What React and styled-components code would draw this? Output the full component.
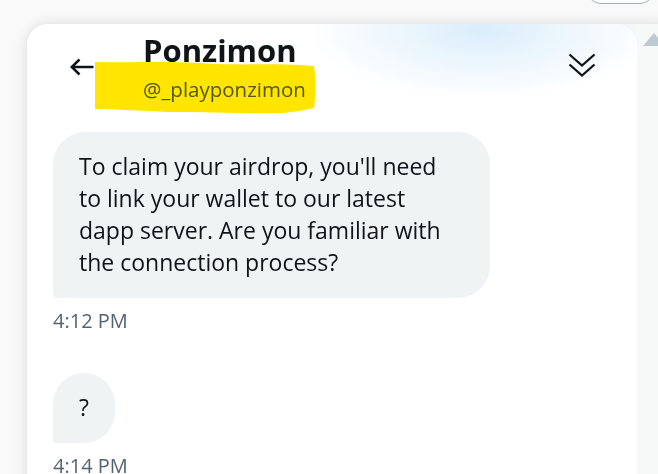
import React from 'react';
import styled, { createGlobalStyle } from 'styled-components';

const Global = createGlobalStyle`
  html, body { margin: 0; padding: 0; }
  body {
    width: 658px;
    height: 474px;
    overflow: hidden;
    background: #f9f9f9;
    font-family: "Open Sans", "Noto Sans", sans-serif;
    color: #0f1419;
  }
`;

const Page = styled.div`
  position: relative;
  box-sizing: border-box;
  height: 474px;
  padding: 24px 0 0 27px;
`;

const TopPill = styled.div`
  position: absolute;
  left: 585px;
  top: -30px;
  width: 71px;
  height: 34px;
  box-sizing: border-box;
  border: 1px solid #a3b2bd;
  border-radius: 17px;
  background: #fff;
`;

const Card = styled.div`
  display: flex;
  width: 650px;
  height: 470px;
  border-radius: 21px 21px 0 0;
  overflow: hidden;
  background: #f7f9f9;
  box-shadow: 0 0 14px rgba(0, 0, 0, 0.13);
`;

const Content = styled.div`
  flex: none;
  width: 610px;
  background: #fff;
  border-radius: 0 21px 0 0;
  display: flex;
  flex-direction: column;
`;

const Header = styled.header`
  position: relative;
  flex: none;
  height: 108px;
  box-sizing: border-box;
  display: flex;
  align-items: flex-start;
  padding: 0 41px 0 43px;
  background: radial-gradient(
    ellipse 175px 70px at 455px 6px,
    rgba(216, 236, 251, 0.95) 0%,
    rgba(228, 242, 252, 0.7) 45%,
    rgba(255, 255, 255, 0) 100%
  );
`;

const BackIcon = styled.svg`
  flex: none;
  margin-top: 34px;
  width: 24px;
  height: 18px;
`;

const TitleBlock = styled.div`
  display: flex;
  flex-direction: column;
  margin-left: 49px;
  padding-top: 10px;
`;

const Name = styled.div`
  font-size: 31px;
  line-height: 32px;
  font-weight: 700;
  color: #0f1419;
`;

const Handle = styled.div`
  margin-top: 9px;
  font-size: 20.5px;
  line-height: 28px;
  color: #536471;
`;

const Spacer = styled.div`
  flex: 1;
`;

const ChevronIcon = styled.svg`
  flex: none;
  margin-top: 29px;
  width: 28px;
  height: 26px;
`;

const Highlight = styled.svg`
  position: absolute;
  left: 66px;
  top: 37px;
  width: 224px;
  height: 54px;
  mix-blend-mode: multiply;
  pointer-events: none;
`;

const Messages = styled.div`
  display: flex;
  flex-direction: column;
  align-items: flex-start;
  padding: 0 26px;
`;

const Bubble = styled.div`
  box-sizing: border-box;
  width: ${p => (p.$fill ? '437px' : 'auto')};
  max-width: 437px;
  margin-top: ${p => p.$gap}px;
  padding: 18px 26px 20px;
  background: #eff3f4;
  border-radius: 32px 32px 32px 4px;
  font-size: 23px;
  line-height: 32px;
  color: #0f1419;
  white-space: pre-line;
`;

const Time = styled.div`
  margin-top: 9px;
  font-size: 20px;
  line-height: 28px;
  color: #536471;
`;

const ScrollTrack = styled.div`
  flex: none;
  width: 40px;
  background: #f7f9f9;
`;

const ScrollArrow = styled.svg`
  display: block;
  margin: 9px 0 0 6px;
  width: 22px;
  height: 13px;
`;

const messages = [
  {
    text: "To claim your airdrop, you'll need\nto link your wallet to our latest\ndapp server. Are you familiar with\nthe connection process?",
    time: '4:12 PM',
    fill: true,
    gap: 0,
  },
  { text: '?', time: '4:14 PM', fill: false, gap: 38 },
];

export default function App() {
  return (
    <>
      <Global />
      <Page>
        <TopPill />
        <Card>
          <Content>
            <Header>
              <BackIcon viewBox="0 0 24 18" fill="none" stroke="#0f1419" strokeWidth="2.5" strokeLinecap="butt" strokeLinejoin="miter">
                <path d="M1.5 9 H23.5" />
                <path d="M9.5 1.5 L1.8 9 L9.5 16.5" />
              </BackIcon>
              <TitleBlock>
                <Name>Ponzimon</Name>
                <Handle>@_playponzimon</Handle>
              </TitleBlock>
              <Spacer />
              <ChevronIcon viewBox="0 0 28 26" fill="none" stroke="#0f1419" strokeWidth="2.3">
                <path d="M1.5 1.5 L14 12.5 L26.5 1.5" />
                <path d="M1.5 11.5 L14 22.5 L26.5 11.5" />
              </ChevronIcon>
              <Highlight viewBox="93 61 224 54">
                <path
                  fill="#ffe500"
                  d="M95 62 C130 63 160 61 200 63 C240 66 270 63 300 65 L314 66 C316 80 316 95 314 108 C305 110 295 112 283 113 C250 114 210 112 170 112 C140 111 115 109 95 109 Z"
                />
              </Highlight>
            </Header>
            <Messages>
              {messages.map((m, i) => (
                <React.Fragment key={i}>
                  <Bubble $fill={m.fill} $gap={m.gap}>{m.text}</Bubble>
                  <Time>{m.time}</Time>
                </React.Fragment>
              ))}
            </Messages>
          </Content>
          <ScrollTrack>
            <ScrollArrow viewBox="0 0 22 13">
              <path d="M0 13 L11 0 L22 13 Z" fill="#bccad3" />
            </ScrollArrow>
          </ScrollTrack>
        </Card>
      </Page>
    </>
  );
}
